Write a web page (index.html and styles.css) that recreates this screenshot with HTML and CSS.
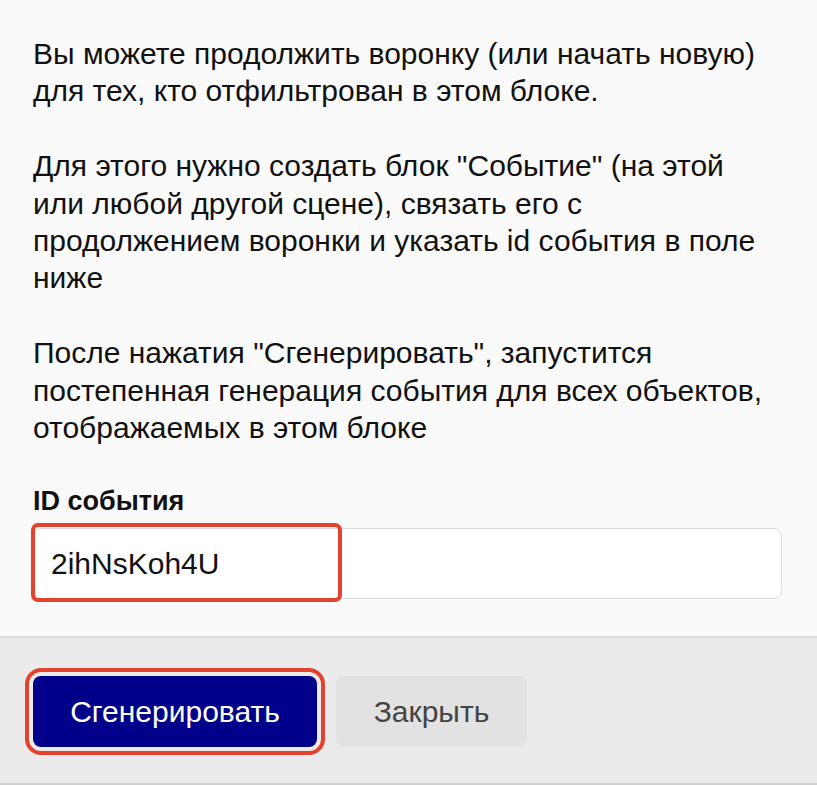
FILE: index.html
```html
<!DOCTYPE html>
<html lang="ru">
<head>
<meta charset="utf-8">
<link rel="stylesheet" href="styles.css">
</head>
<body>
<div class="modal">
  <div class="content">
    <p class="text">Вы можете продолжить воронку (или начать новую) для тех, кто отфильтрован в этом блоке.</p>
    <p class="text">Для этого нужно создать блок "Событие" (на этой или любой другой сцене), связать его с продолжением воронки и указать id события в поле ниже</p>
    <p class="text">После нажатия "Сгенерировать", запустится постепенная генерация события для всех объектов, отображаемых в этом блоке</p>
    <label class="label" for="eid">ID события</label>
    <div class="field">
      <input id="eid" class="input" type="text" value="2ihNsKoh4U">
      <div class="highlight"></div>
    </div>
  </div>
  <div class="footer">
    <button class="btn btn-primary">Сгенерировать</button>
    <button class="btn btn-secondary">Закрыть</button>
  </div>
</div>
</body>
</html>
```
FILE: styles.css
```css
html, body {
  margin: 0;
  padding: 0;
  background: #fafafa;
}
body {
  font-family: "Liberation Sans", Arial, sans-serif;
  color: #111;
  width: 817px;
  height: 785px;
  overflow: hidden;
}
.modal {
  display: flex;
  flex-direction: column;
  height: 785px;
  box-sizing: border-box;
  border-bottom: 2px solid #cfcfcf;
}
.content {
  padding: 35px 35px 37px 33px;
  display: flex;
  flex-direction: column;
}
.text {
  margin: 0 0 37.4px 0;
  font-size: 30px;
  line-height: 37.4px;
  padding-right: 15px;
}
.text:nth-of-type(3) {
  margin-bottom: 40px;
}
.label {
  font-size: 27px;
  font-weight: bold;
  line-height: 30px;
  margin-bottom: 12px;
}
.field {
  position: relative;
}
.input {
  display: block;
  width: 100%;
  box-sizing: border-box;
  height: 71px;
  border: 1px solid #dcdcdc;
  border-radius: 8px;
  background: #fff;
  padding: 0 17px;
  font-family: "Liberation Sans", Arial, sans-serif;
  font-size: 30px;
  color: #111;
  outline: none;
}
.highlight {
  position: absolute;
  left: -2px;
  top: -5px;
  width: 311px;
  height: 79px;
  box-sizing: border-box;
  border: 4px solid #e5412f;
  border-radius: 7px;
  pointer-events: none;
}
.footer {
  flex: 1;
  background: #ebebeb;
  border-top: 2px solid #dedede;
  padding: 38px 33px 0 33px;
  display: flex;
  align-items: flex-start;
  gap: 19px;
}
.btn {
  height: 71px;
  border: none;
  border-radius: 8px;
  font-family: "Liberation Sans", Arial, sans-serif;
  font-size: 30px;
  padding: 0;
  cursor: pointer;
}
.btn-primary {
  width: 284px;
  background: #00008b;
  color: #fff;
  outline: 4px solid #e5412f;
  outline-offset: 4px;
}
.btn-secondary {
  width: 191px;
  background: #e2e2e2;
  color: #444;
}
```
